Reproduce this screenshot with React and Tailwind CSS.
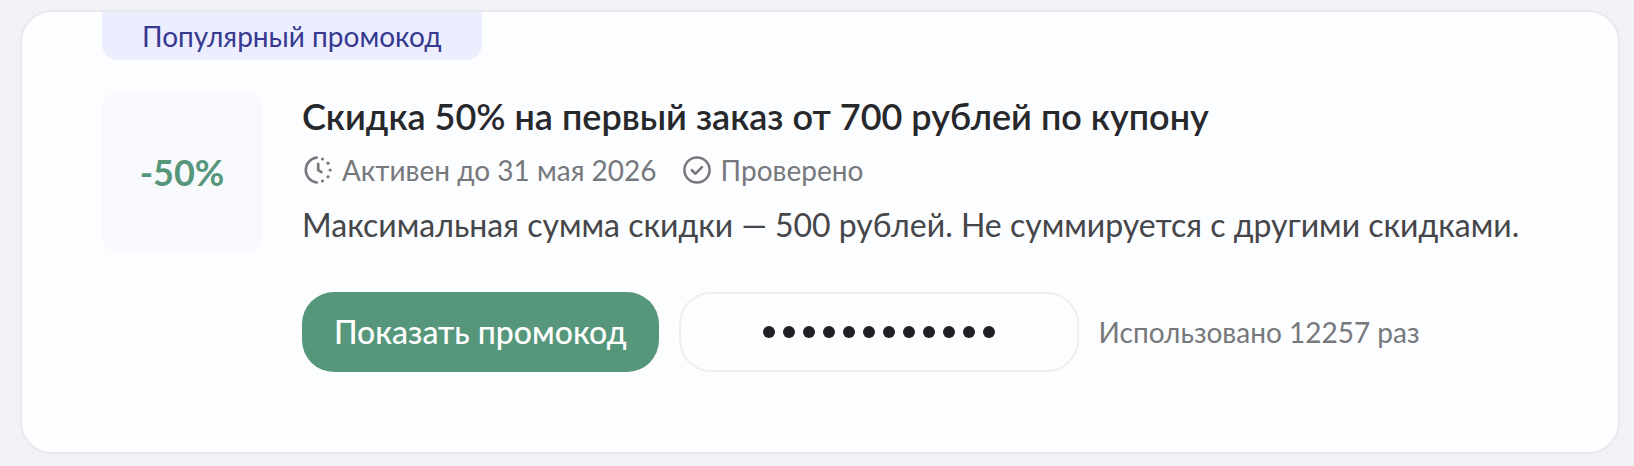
import React from "react";

const COUPON = {
  badge: "Популярный промокод",
  discount: "-50%",
  title: "Скидка 50% на первый заказ от 700 рублей по купону",
  expires: "Активен до 31 мая 2026",
  description: "Максимальная сумма скидки — 500 рублей. Не суммируется с другими скидками.",
  usedCount: 12257,
  codeLength: 12,
};

function ClockIcon() {
  return (
    <svg className="size-8 shrink-0" viewBox="0 0 32 32" fill="none" aria-hidden="true">
      <path d="M14.8 3.5A12.6 12.6 0 0 0 14.8 28.5" stroke="currentColor" strokeWidth="2.6" strokeLinecap="round" />
      <path d="M16.2 9.8v6.4l3.3 2" stroke="currentColor" strokeWidth="2.6" strokeLinecap="round" strokeLinejoin="round" />
      <g fill="currentColor">
        <circle cx="20.5" cy="5" r="1.6" />
        <circle cx="26" cy="9.2" r="1.6" />
        <circle cx="28.1" cy="16" r="1.6" />
        <circle cx="26" cy="22.8" r="1.6" />
        <circle cx="20.5" cy="27" r="1.6" />
      </g>
    </svg>
  );
}

function CheckIcon() {
  return (
    <svg className="size-8 shrink-0" viewBox="0 0 32 32" fill="none" aria-hidden="true">
      <circle cx="16" cy="16" r="12.6" stroke="currentColor" strokeWidth="2.5" />
      <path d="M10.8 16.2l3.7 3.5 6.5-6.6" stroke="currentColor" strokeWidth="2.6" strokeLinecap="round" strokeLinejoin="round" />
    </svg>
  );
}

function HiddenCode({ length }) {
  return (
    <div
      role="img"
      aria-label="Промокод скрыт"
      className="flex h-20 w-[400px] items-center justify-center gap-2 rounded-4xl border-2 border-[#efeff1]"
    >
      {Array.from({ length }, (_, i) => (
        <span key={i} className="size-3 rounded-full bg-[#202124]" />
      ))}
    </div>
  );
}

export default function App() {
  return (
    <main className="min-h-screen bg-[#f1f2f6] pt-[10px] pr-[14px] pb-3 pl-5 font-['Lato',sans-serif]">
      <article className="rounded-4xl border-2 border-[#e9eaee] bg-[#fcfdff] px-20 pb-20">
        <div className="inline-flex h-12 items-center rounded-b-2xl bg-[#eceeff] px-10 text-[28px] leading-9 text-[#36398f]">
          {COUPON.badge}
        </div>

        <div className="mt-8 flex items-start gap-10">
          <div className="flex size-40 shrink-0 items-center justify-center rounded-2xl bg-[#f8f9fc] text-4xl font-bold text-[#56977b]">
            {COUPON.discount}
          </div>

          <div className="min-w-0 flex-1">
            <h2 className="pt-0.5 text-4xl leading-[44px] font-semibold text-[#27282b]">{COUPON.title}</h2>

            <div className="mt-3.5 flex items-center gap-6 text-[28px] leading-9 text-[#77787b]">
              <span className="flex items-center gap-2">
                <ClockIcon />
                {COUPON.expires}
              </span>
              <span className="flex items-center gap-2">
                <CheckIcon />
                Проверено
              </span>
            </div>

            <p className="mt-4 text-[32px] leading-[42px] text-[#454649]">{COUPON.description}</p>

            <div className="mt-[46px] flex items-center gap-5">
              <button
                type="button"
                className="h-20 rounded-4xl bg-[#56977b] px-8 text-[32px] leading-10 font-medium text-white"
              >
                Показать промокод
              </button>
              <HiddenCode length={COUPON.codeLength} />
              <span className="text-[28px] leading-9 text-[#77787b]">Использовано {COUPON.usedCount} раз</span>
            </div>
          </div>
        </div>
      </article>
    </main>
  );
}
